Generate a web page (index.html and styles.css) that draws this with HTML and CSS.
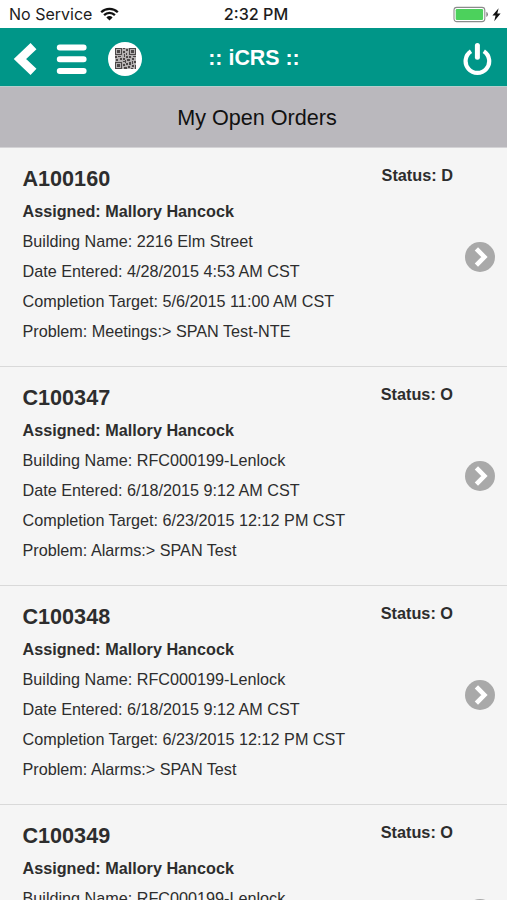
FILE: index.html
```
<!DOCTYPE html>
<html lang="en">
<head>
  <meta charset="UTF-8">
  <meta name="viewport" content="width=device-width, initial-scale=1.0">
  <title>iCRS | My Open Orders</title>
  <link rel="stylesheet" href="styles.css">
</head>
<body>
  <div class="status-bar">
    <div class="carrier">
      <span>No Service</span>
      <svg class="wifi" width="19" height="14" viewBox="0 0 19 14">
        <path d="M1.2 5.2a11.8 11.8 0 0 1 16.6 0M4.1 8.1a7.7 7.7 0 0 1 10.8 0" fill="none" stroke="#111" stroke-width="2.3"/>
        <path d="M9.5 13.6L6.4 10.4a4.4 4.4 0 0 1 6.2 0z" fill="#111"/>
      </svg>
    </div>
    <div class="clock">2:32 PM</div>
    <svg class="battery" width="49" height="17" viewBox="-1 0 49 17">
      <rect x="0" y="1.4" width="30.8" height="14.2" rx="2.8" fill="#fff" stroke="#8b8b8b" stroke-width="1.1"/>
      <rect x="1.7" y="3.1" width="27.4" height="10.8" rx="1.2" fill="#4cd15c"/>
      <path d="M32.4 5.8a3 3 0 0 1 0 5.2z" fill="#777"/>
      <path d="M44.6 2.2L38.4 9.4h3.2l-1.4 5.8 6.4-7.6h-3.3z" fill="#111"/>
    </svg>
  </div>

  <header class="header">
    <div class="header-left">
      <svg class="back" width="24" height="34" viewBox="0 0 24 34">
        <path d="M20.5 4.2L7 17l13.5 12.8" fill="none" stroke="#fff" stroke-width="8.6"/>
      </svg>
      <svg class="menu" width="32" height="32" viewBox="0 0 32 32">
        <path d="M4.8 4.4h23.8M4.8 16.2h23.8M4.8 28h23.8" stroke="#fff" stroke-width="6" stroke-linecap="round"/>
      </svg>
      <span class="qr">
        <svg width="21" height="21" viewBox="0 0 21 21" shape-rendering="crispEdges">
          <rect width="21" height="21" fill="#b5b1b1"/>
          <path d="M.5 .5h6v6h-6zM14.5 .5h6v6h-6zM.5 14.5h6v6h-6z" fill="none" stroke="#4c4848"/>
          <path d="M2 2h3v3h-3zM16 2h3v3h-3zM2 16h3v3h-3zM8 0h2v1h-2zM11 1h2v2h-2zM8 3h2v2h-2zM11 5h1v2h-1zM9 6h1v3h-1zM0 8h2v2h-2zM3 8h3v1h-3zM5 10h2v2h-2zM1 11h2v2h-2zM8 10h2v2h-2zM11 8h2v2h-2zM12 11h3v2h-3zM14 8h2v2h-2zM18 8h3v1h-3zM17 10h2v2h-2zM8 13h2v1h-2zM10 12h1v3h-1zM8 16h2v2h-2zM11 15h2v2h-2zM9 19h3v2h-3zM13 18h2v2h-2zM14 14h2v3h-2zM17 13h1v3h-1zM19 13h2v2h-2zM17 17h2v2h-2zM16 20h2v1h-2zM20 17h1v4h-1z" fill="#4c4848"/>
        </svg>
      </span>
    </div>
    <h1>:: iCRS ::</h1>
    <svg class="power" width="30" height="34" viewBox="0 0 30 34">
      <path d="M8 9.2a11.8 11.8 0 1 0 12.8 0" fill="none" stroke="#fff" stroke-width="4.2"/>
      <path d="M14.4 3.6v11.6" stroke="#fff" stroke-width="5" stroke-linecap="round"/>
    </svg>
  </header>

  <h2 class="page-title">My Open Orders</h2>

  <ul class="orders">
    <li class="order">
      <div class="info">
        <h3>A100160</h3>
        <p class="assigned">Assigned: Mallory Hancock</p>
        <p>Building Name: 2216 Elm Street</p>
        <p>Date Entered: 4/28/2015 4:53 AM CST</p>
        <p>Completion Target: 5/6/2015 11:00 AM CST</p>
        <p>Problem: Meetings:&gt; SPAN Test-NTE</p>
      </div>
      <span class="status">Status: D</span>
      <span class="arrow"><svg width="30" height="30" viewBox="0 0 30 30"><path d="M11.4 6.8l8 8.2-8 8.2" fill="none" stroke="#fff" stroke-width="4.6"/></svg></span>
    </li>
    <li class="order">
      <div class="info">
        <h3>C100347</h3>
        <p class="assigned">Assigned: Mallory Hancock</p>
        <p>Building Name: RFC000199-Lenlock</p>
        <p>Date Entered: 6/18/2015 9:12 AM CST</p>
        <p>Completion Target: 6/23/2015 12:12 PM CST</p>
        <p>Problem: Alarms:&gt; SPAN Test</p>
      </div>
      <span class="status">Status: O</span>
      <span class="arrow"><svg width="30" height="30" viewBox="0 0 30 30"><path d="M11.4 6.8l8 8.2-8 8.2" fill="none" stroke="#fff" stroke-width="4.6"/></svg></span>
    </li>
    <li class="order">
      <div class="info">
        <h3>C100348</h3>
        <p class="assigned">Assigned: Mallory Hancock</p>
        <p>Building Name: RFC000199-Lenlock</p>
        <p>Date Entered: 6/18/2015 9:12 AM CST</p>
        <p>Completion Target: 6/23/2015 12:12 PM CST</p>
        <p>Problem: Alarms:&gt; SPAN Test</p>
      </div>
      <span class="status">Status: O</span>
      <span class="arrow"><svg width="30" height="30" viewBox="0 0 30 30"><path d="M11.4 6.8l8 8.2-8 8.2" fill="none" stroke="#fff" stroke-width="4.6"/></svg></span>
    </li>
    <li class="order">
      <div class="info">
        <h3>C100349</h3>
        <p class="assigned">Assigned: Mallory Hancock</p>
        <p>Building Name: RFC000199-Lenlock</p>
      </div>
      <span class="status">Status: O</span>
      <span class="arrow"><svg width="30" height="30" viewBox="0 0 30 30"><path d="M11.4 6.8l8 8.2-8 8.2" fill="none" stroke="#fff" stroke-width="4.6"/></svg></span>
    </li>
  </ul>
</body>
</html>
```
FILE: styles.css
```
* { box-sizing: border-box; }
body { margin: 0; height: 900px; overflow: hidden; background: #f5f5f5; color: #2d2d2d; font-family: "Liberation Sans", Arial, sans-serif; font-size: 16.2px; }
h1, h2, h3, p, ul { margin: 0; padding: 0; }
svg { display: block; flex: none; }

.status-bar { display: grid; grid-template-columns: 1fr auto 1fr; align-items: center; height: 28px; padding: 0 5px 0 9px; background: #fff; color: #1c1c1c; font-family: Inter, sans-serif; font-size: 16px; }
.carrier { display: flex; align-items: center; gap: 8px; }
.clock { font-weight: 500; font-size: 16.2px; padding-left: 1px; }
.battery { justify-self: end; }

.header { display: grid; grid-template-columns: 1fr auto 1fr; align-items: center; height: 59px; padding: 3px 14px 0 13px; background: #009688; border-bottom: 1px solid #b5cfcc; color: #fff; }
.header h1 { font-size: 21.4px; line-height: 28px; padding-left: 2px; margin-top: -2px; }
.header-left { display: flex; align-items: center; }
.menu { margin-left: 18px; }
.qr { display: flex; align-items: center; justify-content: center; width: 34px; height: 34px; margin-left: 21px; background: #fff; border-radius: 50%; }
.power { justify-self: end; }

.page-title { height: 61px; background: #bab8bd; border-bottom: 1px solid #d4d3d6; color: #111; font-size: 21.6px; font-weight: normal; line-height: 61px; text-align: center; padding-left: 7px; }

.orders { list-style: none; }
.order { display: flex; height: 219px; padding: 16px 12px 0 22.5px; border-bottom: 1px solid #d9d9d9; }
.info { flex: 1; white-space: nowrap; }
.info h3 { font-size: 21.6px; line-height: 30px; margin-bottom: 2px; }
.info p { line-height: 30px; }
.info .assigned { font-weight: bold; }
.status { font-size: 16.3px; font-weight: bold; line-height: 22px; }
.arrow { align-self: flex-start; width: 30px; height: 30px; margin: 78px 0 0 12px; background: #a9a9a9; border-radius: 50%; }
```
